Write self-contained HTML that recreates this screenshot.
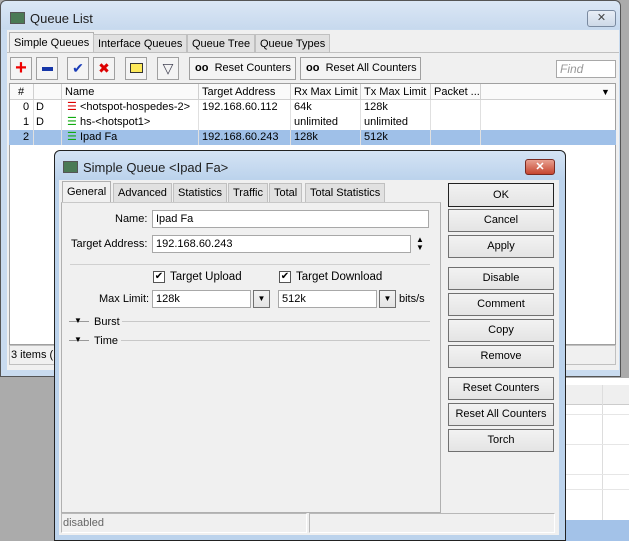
<!DOCTYPE html>
<html><head><style>
*{box-sizing:border-box;margin:0;padding:0}
body{width:629px;height:541px;overflow:hidden;background:#ababab;font-family:"Liberation Sans",sans-serif;font-size:11px;color:#000;position:relative}
.a{position:absolute}
.t{position:absolute;white-space:nowrap}
.btn{position:absolute;border:1px solid #707070;background:linear-gradient(#f2f2f2,#e4e4e4);text-align:center;font-size:11px;white-space:nowrap}
.inp{position:absolute;background:#fff;border:1px solid #a8a8a8;padding-left:3px;font-size:11px;line-height:16px}
.tab{position:absolute;background:#e1e1e1;border:1px solid #c0c0c0;border-bottom:none;font-size:11px;padding:3px 4px 0 4px;height:19px;white-space:nowrap}
.tabsel{background:#f0f0f0;border-color:#b0b0b0}
.tb{position:absolute;top:57px;height:23px;border:1px solid #a0a0a0;background:#f4f4f4;white-space:nowrap}
.hd{position:absolute;top:84px;height:16px;border-right:1px solid #d0d0d0;padding-left:3px;line-height:16px;white-space:nowrap;overflow:hidden}
.row{position:absolute;left:9px;width:607px;height:15px;line-height:15px}
</style></head><body>
<div class="a" style="left:565px;top:378px;width:64px;height:163px;background:#fff"></div>
<div class="a" style="left:565px;top:385px;width:64px;height:20px;background:#efefef;border-bottom:1px solid #ccc"></div>
<div class="a" style="left:602px;top:385px;width:1px;height:135px;background:#ddd"></div>
<div class="a" style="left:565px;top:414px;width:64px;height:1px;background:#e6e6e6"></div>
<div class="a" style="left:565px;top:444px;width:64px;height:1px;background:#e6e6e6"></div>
<div class="a" style="left:565px;top:474px;width:64px;height:1px;background:#e6e6e6"></div>
<div class="a" style="left:565px;top:489px;width:64px;height:1px;background:#e6e6e6"></div>
<div class="a" style="left:565px;top:520px;width:64px;height:21px;background:#a3c2e8"></div>
<div class="a" style="left:55px;top:534px;width:510px;height:7px;background:#ddd"></div>

<div class="a" style="left:0;top:0;width:621px;height:377px;background:#c9dbef;border:1px solid #555;border-radius:6px 6px 0 0"></div>
<div class="a" style="left:1px;top:1px;width:619px;height:28px;background:linear-gradient(#dbe7f5,#c7d9ee);border-radius:6px 6px 0 0"></div>
<div class="a" style="left:10px;top:12px;width:15px;height:12px;border:1px solid #555;background:#4a7a55"></div>
<div class="t" style="left:30px;top:11px;font-size:13px;color:#1e1e1e">Queue List</div>
<div class="a" style="left:587px;top:10px;width:29px;height:17px;border:1px solid #7a8aa0;border-radius:3px;background:linear-gradient(#e8eef6,#cdd9e8);text-align:center;font-size:11px;line-height:15px;color:#444">✕</div>
<div class="a" style="left:7px;top:30px;width:612px;height:340px;background:#f0f0f0"></div>
<div class="tab tabsel" style="left:9px;top:32px;height:21px;padding-top:4px">Simple Queues</div>
<div class="tab" style="left:93px;top:34px">Interface Queues</div>
<div class="tab" style="left:187px;top:34px">Queue Tree</div>
<div class="tab" style="left:255px;top:34px">Queue Types</div>
<div class="a" style="left:7px;top:52px;width:612px;height:1px;background:#c0c0c0"></div>
<div class="tb" style="left:10px;width:22px;color:#e00;font-size:20px;font-weight:bold;text-align:center;line-height:20px">+</div>
<div class="tb" style="left:36px;width:22px"><div class="a" style="left:5px;top:9px;width:11px;height:4px;background:#1636a8"></div></div>
<div class="tb" style="left:67px;width:22px;color:#1b3db8;font-size:14px;text-align:center;line-height:21px">✔</div>
<div class="tb" style="left:93px;width:22px;color:#d00;font-size:14px;text-align:center;line-height:21px">✖</div>
<div class="tb" style="left:125px;width:22px"><div class="a" style="left:4px;top:5px;width:13px;height:10px;background:#fde95a;border:1px solid #333"></div></div>
<div class="tb" style="left:157px;width:22px;text-align:center;font-size:14px;line-height:20px;color:#445">▽</div>
<div class="tb" style="left:189px;width:107px;font-size:11px;line-height:21px;padding-left:5px"><b>oo</b>&nbsp; Reset Counters</div>
<div class="tb" style="left:300px;width:121px;font-size:11px;line-height:21px;padding-left:5px"><b>oo</b>&nbsp; Reset All Counters</div>
<div class="inp" style="left:556px;top:60px;width:60px;height:18px;color:#999;font-style:italic;font-size:12px">Find</div>
<div class="a" style="left:9px;top:83px;width:607px;height:262px;background:#fff;border:1px solid #a0a0a0"></div>
<div class="a" style="left:10px;top:84px;width:605px;height:16px;background:#fafafa;border-bottom:1px solid #d0d0d0"></div>
<div class="hd" style="left:10px;width:24px;padding-left:8px">#</div>
<div class="hd" style="left:34px;width:28px"></div>
<div class="hd" style="left:62px;width:137px">Name</div>
<div class="hd" style="left:199px;width:92px">Target Address</div>
<div class="hd" style="left:291px;width:70px">Rx Max Limit</div>
<div class="hd" style="left:361px;width:70px">Tx Max Limit</div>
<div class="hd" style="left:431px;width:50px">Packet ...</div>
<div class="t" style="left:601px;top:87px;font-size:9px">▼</div>
<div class="row" style="top:100px"><span class="t" style="left:14px">0</span><span class="t" style="left:27px">D</span><span class="t" style="left:58px;color:#d00">☰</span><span class="t" style="left:71px">&lt;hotspot-hospedes-2&gt;</span><span class="t" style="left:193px">192.168.60.112</span><span class="t" style="left:285px">64k</span><span class="t" style="left:355px">128k</span></div>
<div class="row" style="top:115px"><span class="t" style="left:14px">1</span><span class="t" style="left:27px">D</span><span class="t" style="left:58px;color:#1a1">☰</span><span class="t" style="left:71px">hs-&lt;hotspot1&gt;</span><span class="t" style="left:285px">unlimited</span><span class="t" style="left:355px">unlimited</span></div>
<div class="row" style="top:130px;background:#9fc0e8"><span class="t" style="left:14px">2</span><span class="t" style="left:58px;color:#1a1">☰</span><span class="t" style="left:71px">Ipad Fa</span><span class="t" style="left:193px">192.168.60.243</span><span class="t" style="left:285px">128k</span><span class="t" style="left:355px">512k</span></div>
<div class="a" style="left:33px;top:100px;width:1px;height:45px;background:#e0e0e0"></div>
<div class="a" style="left:61px;top:100px;width:1px;height:45px;background:#e0e0e0"></div>
<div class="a" style="left:198px;top:100px;width:1px;height:45px;background:#e0e0e0"></div>
<div class="a" style="left:290px;top:100px;width:1px;height:45px;background:#e0e0e0"></div>
<div class="a" style="left:360px;top:100px;width:1px;height:45px;background:#e0e0e0"></div>
<div class="a" style="left:430px;top:100px;width:1px;height:45px;background:#e0e0e0"></div>
<div class="a" style="left:480px;top:100px;width:1px;height:45px;background:#e0e0e0"></div>
<div class="a" style="left:9px;top:345px;width:607px;height:20px;border:1px solid #c0c0c0;background:#f0f0f0"></div>
<div class="t" style="left:11px;top:349px">3 items (1</div>

<div class="a" style="left:54px;top:150px;width:512px;height:391px;background:#bcd3ec;border:1px solid #222;border-radius:6px 6px 0 0"></div>
<div class="a" style="left:55px;top:151px;width:510px;height:28px;background:linear-gradient(#d4e3f4,#bcd3ec);border-radius:6px 6px 0 0"></div>
<div class="a" style="left:63px;top:161px;width:15px;height:12px;border:1px solid #555;background:#4a7a55"></div>
<div class="t" style="left:83px;top:160px;font-size:13px;color:#1e1e1e">Simple Queue &lt;Ipad Fa&gt;</div>
<div class="a" style="left:525px;top:159px;width:30px;height:16px;border:1px solid #7a2a20;border-radius:3px;background:linear-gradient(#e8a090,#c6452f);text-align:center;font-size:11px;line-height:14px;color:#fff;font-weight:bold">✕</div>
<div class="a" style="left:59px;top:180px;width:500px;height:355px;background:#f0f0f0"></div>
<div class="tab tabsel" style="left:62px;top:181px;height:22px;padding-top:4px">General</div>
<div class="tab" style="left:113px;top:183px">Advanced</div>
<div class="tab" style="left:173px;top:183px">Statistics</div>
<div class="tab" style="left:228px;top:183px">Traffic</div>
<div class="tab" style="left:269px;top:183px">Total</div>
<div class="tab" style="left:305px;top:183px">Total Statistics</div>
<div class="a" style="left:61px;top:202px;width:380px;height:311px;border:1px solid #b0b0b0;border-top:1px solid #c8c8c8"></div>
<div class="t" style="left:115px;top:213px">Name:</div>
<div class="inp" style="left:152px;top:210px;width:277px;height:18px">Ipad Fa</div>
<div class="t" style="left:71px;top:238px">Target Address:</div>
<div class="inp" style="left:152px;top:235px;width:259px;height:18px">192.168.60.243</div>
<div class="t" style="left:416px;top:236px;font-size:8px;line-height:8px">▲<br>▼</div>
<div class="a" style="left:70px;top:264px;width:360px;height:1px;background:#d0d0d0"></div>
<div class="a" style="left:153px;top:271px;width:12px;height:12px;border:1px solid #555;background:#fff;font-size:10px;line-height:10px;text-align:center">✔</div>
<div class="t" style="left:170px;top:271px;font-size:11.5px">Target Upload</div>
<div class="a" style="left:279px;top:271px;width:12px;height:12px;border:1px solid #555;background:#fff;font-size:10px;line-height:10px;text-align:center">✔</div>
<div class="t" style="left:296px;top:271px;font-size:11.5px">Target Download</div>
<div class="t" style="left:99px;top:293px">Max Limit:</div>
<div class="inp" style="left:152px;top:290px;width:99px;height:18px">128k</div>
<div class="btn" style="left:253px;top:290px;width:17px;height:18px;font-size:8px;line-height:16px">▼</div>
<div class="inp" style="left:278px;top:290px;width:99px;height:18px">512k</div>
<div class="btn" style="left:379px;top:290px;width:17px;height:18px;font-size:8px;line-height:16px">▼</div>
<div class="t" style="left:399px;top:293px">bits/s</div>
<div class="a" style="left:69px;top:321px;width:20px;height:1px;background:#999"></div>
<div class="t" style="left:74px;top:316px;font-size:8px">▼</div>
<div class="t" style="left:94px;top:316px">Burst</div>
<div class="a" style="left:122px;top:321px;width:308px;height:1px;background:#c8c8c8"></div>
<div class="a" style="left:69px;top:340px;width:20px;height:1px;background:#999"></div>
<div class="t" style="left:74px;top:335px;font-size:8px">▼</div>
<div class="t" style="left:94px;top:335px">Time</div>
<div class="a" style="left:121px;top:340px;width:309px;height:1px;background:#c8c8c8"></div>
<div class="btn" style="left:448px;top:183px;width:106px;height:24px;line-height:22px;border:1px solid #222">OK</div>
<div class="btn" style="left:448px;top:209px;width:106px;height:23px;line-height:21px">Cancel</div>
<div class="btn" style="left:448px;top:235px;width:106px;height:23px;line-height:21px">Apply</div>
<div class="btn" style="left:448px;top:267px;width:106px;height:23px;line-height:21px">Disable</div>
<div class="btn" style="left:448px;top:293px;width:106px;height:23px;line-height:21px">Comment</div>
<div class="btn" style="left:448px;top:319px;width:106px;height:23px;line-height:21px">Copy</div>
<div class="btn" style="left:448px;top:345px;width:106px;height:23px;line-height:21px">Remove</div>
<div class="btn" style="left:448px;top:377px;width:106px;height:23px;line-height:21px">Reset Counters</div>
<div class="btn" style="left:448px;top:403px;width:106px;height:23px;line-height:21px">Reset All Counters</div>
<div class="btn" style="left:448px;top:429px;width:106px;height:23px;line-height:21px">Torch</div>
<div class="a" style="left:61px;top:513px;width:246px;height:20px;border:1px solid #b8b8b8;border-right-color:#fff;border-bottom-color:#fff;color:#666;padding:3px 0 0 1px">disabled</div>
<div class="a" style="left:309px;top:513px;width:246px;height:20px;border:1px solid #b8b8b8;border-right-color:#fff;border-bottom-color:#fff"></div>
</body></html>
